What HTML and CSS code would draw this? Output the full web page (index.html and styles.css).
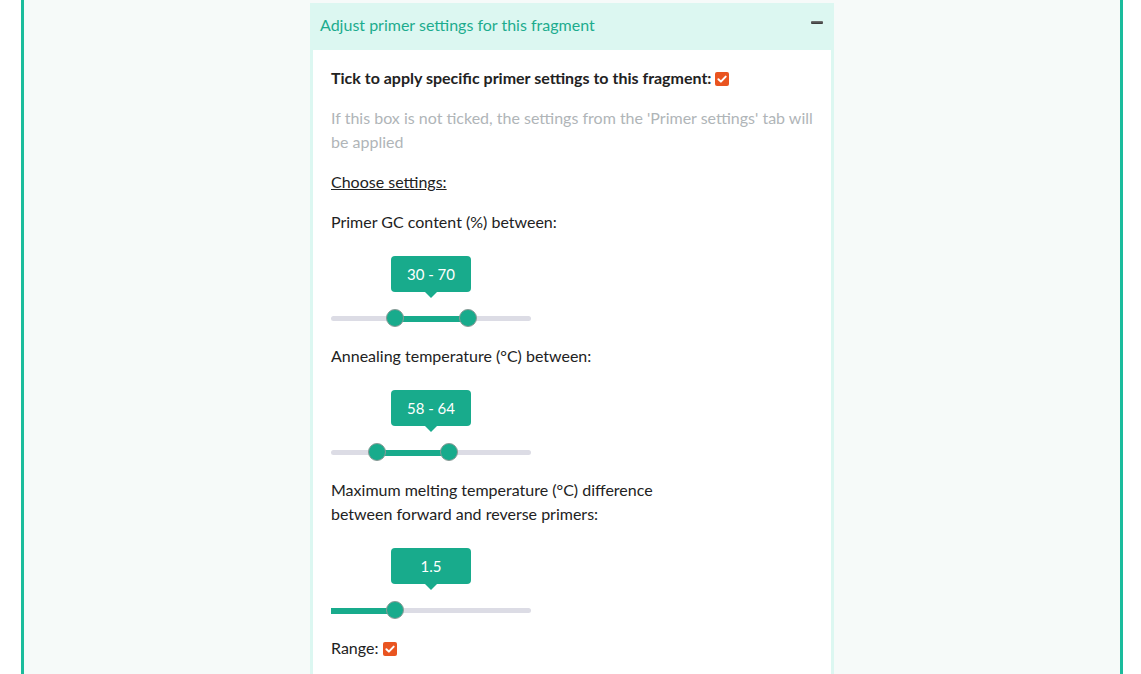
FILE: index.html
```html
<!DOCTYPE html>
<html>
<head>
<meta charset="utf-8">
<link rel="stylesheet" href="styles.css">
</head>
<body>
<div class="page">
  <div class="panel">
    <div class="panel-heading">
      <span class="panel-title">Adjust primer settings for this fragment</span>
      <span class="collapse-icon"></span>
    </div>
    <div class="panel-body">
      <p class="line bold">Tick to apply specific primer settings to this fragment: <span class="check"><svg viewBox="0 0 14 14" width="14" height="14"><path d="M3.4 7.2 L5.9 9.6 L10.7 4.6" fill="none" stroke="#fff" stroke-width="2" stroke-linecap="round" stroke-linejoin="round"/></svg></span></p>
      <p class="line muted">If this box is not ticked, the settings from the 'Primer settings' tab will be applied</p>
      <p class="line"><u>Choose settings:</u></p>
      <p class="line">Primer GC content (%) between:</p>
      <div class="slider">
        <div class="tip">30 - 70</div>
        <div class="track">
          <div class="fill" style="left:64px;width:73px"></div>
          <div class="handle" style="left:64px"></div>
          <div class="handle" style="left:137px"></div>
        </div>
      </div>
      <p class="line">Annealing temperature (°C) between:</p>
      <div class="slider">
        <div class="tip">58 - 64</div>
        <div class="track">
          <div class="fill" style="left:46px;width:72px"></div>
          <div class="handle" style="left:46px"></div>
          <div class="handle" style="left:118px"></div>
        </div>
      </div>
      <p class="line">Maximum melting temperature (°C) difference<br>between forward and reverse primers:</p>
      <div class="slider">
        <div class="tip">1.5</div>
        <div class="track">
          <div class="fill" style="left:0;width:64px"></div>
          <div class="handle" style="left:64px"></div>
        </div>
      </div>
      <p class="line">Range: <span class="check"><svg viewBox="0 0 14 14" width="14" height="14"><path d="M3.4 7.2 L5.9 9.6 L10.7 4.6" fill="none" stroke="#fff" stroke-width="2" stroke-linecap="round" stroke-linejoin="round"/></svg></span></p>
    </div>
  </div>
</div>
</body>
</html>
```

FILE: styles.css
```css
html, body {
  margin: 0;
  padding: 0;
  background: #ffffff;
  font-family: Lato, "Open Sans", sans-serif;
  color: #2c3e50;
}
.page {
  margin: 0 18px 0 21px;
  border-left: 3px solid #1abc9c;
  border-right: 3px solid #1abc9c;
  background: #f6faf9;
  height: 674px;
  overflow: hidden;
  padding-top: 3px;
  box-sizing: border-box;
}
.panel {
  width: 524px;
  margin: 0 auto;
  background: #dcf7f1;
  padding: 0 3px;
  box-sizing: border-box;
}
.panel-heading {
  height: 47px;
  display: flex;
  align-items: center;
  justify-content: space-between;
  padding: 0 8px 4px 7px;
  box-sizing: border-box;
}
.panel-title {
  color: #1cac8e;
  font-size: 16px;
}
.collapse-icon {
  width: 12px;
  height: 3px;
  background: linear-gradient(#777, #333);
  border-radius: 1px;
  margin-top: -4px;
}
.panel-body {
  background: #ffffff;
  padding: 16px 18px 40px 18px;
  min-height: 700px;
}
.line {
  margin: 0 0 16px 0;
  font-size: 16px;
  line-height: 24px;
  color: #222;
}
.bold {
  font-weight: bold;
}
.muted {
  color: #b0b5b8;
}
.check {
  display: inline-block;
  width: 14px;
  height: 14px;
  background: #e95420;
  border-radius: 2px;
  vertical-align: -2px;
}
.check svg {
  display: block;
}
.slider {
  width: 200px;
  height: 78px;
  margin: 0 0 16px 0;
  display: flex;
  flex-direction: column;
  align-items: center;
  padding-top: 6px;
  box-sizing: border-box;
}
.tip {
  position: relative;
  width: 80px;
  height: 36px;
  background: #18ab8c;
  color: #fff;
  border-radius: 4px;
  font-size: 15px;
  display: flex;
  align-items: center;
  justify-content: center;
}
.tip::after {
  content: "";
  position: absolute;
  left: 34px;
  bottom: -6px;
  border-left: 6px solid transparent;
  border-right: 6px solid transparent;
  border-top: 6px solid #18ab8c;
}
.track {
  position: relative;
  align-self: stretch;
  height: 5px;
  margin-top: 24px;
  background: #dcdce5;
  border-radius: 3px;
}
.fill {
  position: absolute;
  top: -0.5px;
  height: 6px;
  background: #18ab8c;
}
.handle {
  position: absolute;
  top: -7px;
  width: 18px;
  height: 18px;
  margin-left: -9px;
  background: #18ab8c;
  border: 1px solid #8a9a96;
  border-radius: 50%;
  box-sizing: border-box;
}
```
